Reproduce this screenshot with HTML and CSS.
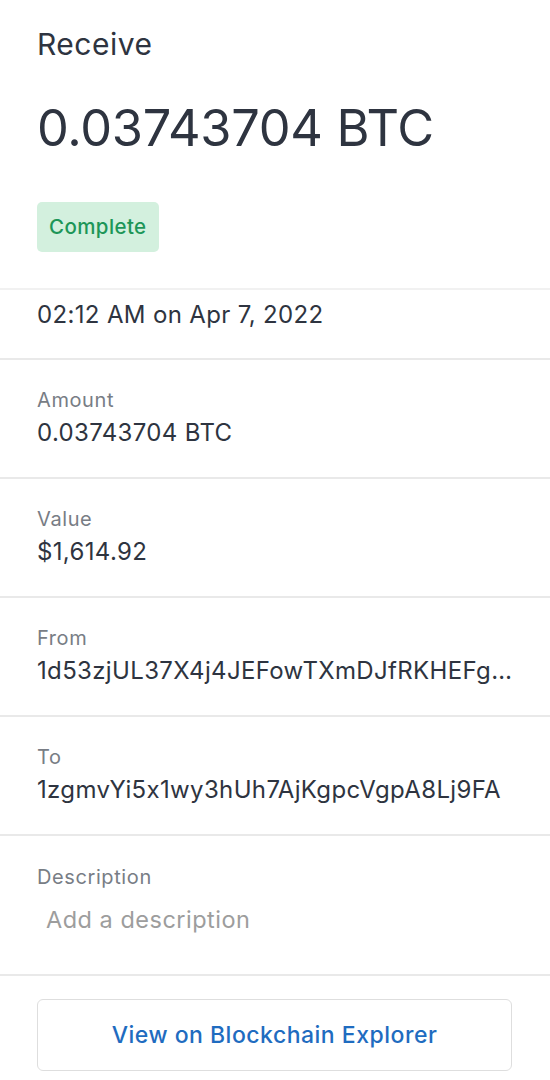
FILE: index.html
```html
<!DOCTYPE html>
<html lang="en">
<head>
    <meta charset="utf-8">
    <meta name="viewport" content="width=device-width, initial-scale=1">
    <title>Receive</title>
    <link rel="stylesheet" href="styles.css">
</head>
<body>
<div class="page">
    <header class="top">
        <h2 class="kind">Receive</h2>
        <h1 class="big-amount">0.03743704 BTC</h1>
        <span class="badge">Complete</span>
    </header>

    <div class="row date-row">
        <p class="value">02:12 AM on Apr 7, 2022</p>
    </div>

    <div class="row">
        <p class="label">Amount</p>
        <p class="value">0.03743704 BTC</p>
    </div>

    <div class="row">
        <p class="label">Value</p>
        <p class="value">$1,614.92</p>
    </div>

    <div class="row">
        <p class="label">From</p>
        <p class="value">1d53zjUL37X4j4JEFowTXmDJfRKHEFg…</p>
    </div>

    <div class="row">
        <p class="label">To</p>
        <p class="value">1zgmvYi5x1wy3hUh7AjKgpcVgpA8Lj9FA</p>
    </div>

    <div class="row desc-row">
        <p class="label">Description</p>
        <input class="desc" type="text" placeholder="Add a description">
    </div>

    <div class="actions">
        <button class="explorer">View on Blockchain Explorer</button>
    </div>
</div>
</body>
</html>
```

FILE: styles.css
```css
body {
    margin: 0;
    background-color: #fff;
    font-family: Inter, "Noto Sans", sans-serif;
    font-feature-settings: "calt" 0;
    color: #2e3440;
}

.page {
    width: 550px;
}

.top {
    padding: 26px 37px 36px;
    border-bottom: 2px solid #f1f1f1;
}

.kind {
    margin: 0;
    font-size: 30px;
    font-weight: 400;
    line-height: 36px;
    letter-spacing: 0.5px;
}

.big-amount {
    margin: 36px 0 0;
    font-size: 50.5px;
    font-weight: 400;
    line-height: 60px;
    letter-spacing: -0.3px;
}

.badge {
    display: block;
    width: fit-content;
    margin-top: 44px;
    padding: 0 12px;
    height: 50px;
    line-height: 50px;
    border-radius: 5px;
    background-color: #d3f0de;
    color: #1d9658;
    font-size: 20.5px;
    font-weight: 500;
    letter-spacing: 0.4px;
}

.row {
    padding: 28px 37px 30px;
    border-bottom: 2px solid #e9e9e9;
}

.date-row {
    padding-top: 11px;
    padding-bottom: 29px;
}

.label {
    margin: 0;
    font-size: 20px;
    line-height: 24px;
    letter-spacing: 0.6px;
    color: #787d85;
}

.value {
    margin: 7px 0 0;
    font-size: 24px;
    line-height: 28px;
    letter-spacing: 0.35px;
    color: #2e3440;
    white-space: nowrap;
}

.date-row .value {
    margin: 0;
}

.desc-row {
    padding-top: 29px;
    padding-bottom: 39px;
}

.desc {
    display: block;
    margin: 16px 0 0;
    padding: 0 0 0 9px;
    border: none;
    outline: none;
    width: 420px;
    height: 30px;
    font-family: inherit;
    font-size: 23.5px;
    line-height: 30px;
    letter-spacing: 0.5px;
    color: #2e3440;
}

.desc::placeholder {
    color: #9d9d9d;
}

.actions {
    padding: 23px 38px 0 37px;
}

.explorer {
    display: block;
    width: 100%;
    height: 72px;
    background-color: #fff;
    border: 1px solid #dedede;
    border-radius: 6px;
    font-family: inherit;
    font-size: 23px;
    font-weight: 500;
    letter-spacing: 0.5px;
    color: #1f6cc0;
}
```
